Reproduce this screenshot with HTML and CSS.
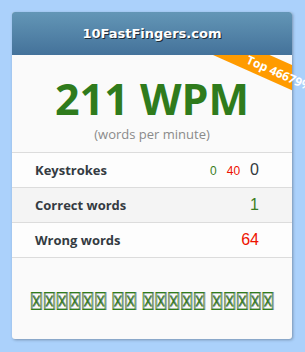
FILE: index.html
```html
<!DOCTYPE html>
<html lang="en">
<head>
  <meta charset="UTF-8">
  <meta name="viewport" content="width=device-width, initial-scale=1.0">
  <title>10FastFingers</title>
  <link rel="stylesheet" href="styles.css">
</head>
<body>

  <div class="card">
    <div class="card-header">10FastFingers.com</div>

    <!-- 리본: 배경은 카드 안에서 잘리고 글자는 잘리지 않음 -->
    <div class="ribbon-clip"><div class="ribbon-band"></div></div>
    <div class="ribbon-text">Top 46679%</div>

    <div class="result">
      <div class="wpm">211 WPM</div>
      <div class="wpm-label">(words per minute)</div>
    </div>

    <div class="stats">
      <div class="stat-row">
        <span class="stat-name">Keystrokes</span>
        <span class="stat-value">
          <small class="good">0</small><small class="bad">40</small>0
        </span>
      </div>
      <div class="stat-row alt">
        <span class="stat-name">Correct words</span>
        <span class="stat-value good">1</span>
      </div>
      <div class="stat-row">
        <span class="stat-name">Wrong words</span>
        <span class="stat-value bad">64</span>
      </div>
    </div>

    <div class="footer-link"><span class="tofu">☒☒☒☒☒☒ ☒☒ ☒☒☒☒☒ ☒☒☒☒☒</span></div>
  </div>

</body>
</html>
```

FILE: styles.css
```css
    body {
      background-color: #abd1fb;
      margin: 0;
      padding: 12px;
    }

    .card {
      width: 280px;
      height: 327px;
      background-color: #fafafa;
      border-radius: 3px;
      box-shadow: 1px 1px 3px rgba(0, 0, 0, 0.3);
      position: relative;
      display: flex;
      flex-direction: column;
    }

    .card-header {
      height: 43px;
      line-height: 43px;
      text-align: center;
      background: linear-gradient(#6396b6, #44729a);
      border-radius: 3px 3px 0 0;
      color: white;
      font-family: "DejaVu Sans", sans-serif;
      font-weight: bold;
      font-size: 13px;
      text-shadow: 1px 1px 0 #1d2b36;
    }

    /* 오른쪽 위 리본 */
    .ribbon-clip {
      position: absolute;
      left: 0;
      right: 0;
      top: 43px;
      bottom: 0;
      overflow: hidden;
    }

    .ribbon-band {
      position: absolute;
      left: 201px;
      top: -23px;
      width: 160px;
      height: 23px;
      background-color: #ff9b00;
      transform-origin: 0 100%;
      transform: rotate(24deg);
    }

    .ribbon-text {
      position: absolute;
      left: 201px;
      top: 20px;
      height: 23px;
      line-height: 26px;
      padding-left: 33px;
      white-space: nowrap;
      color: white;
      font-family: "Open Sans", sans-serif;
      font-weight: bold;
      font-size: 12px;
      transform-origin: 0 100%;
      transform: rotate(24deg);
    }

    .result {
      text-align: center;
      padding-top: 22px;
      height: 75px;
    }

    .wpm {
      font-family: "Open Sans", sans-serif;
      font-weight: bold;
      font-size: 43px;
      line-height: 44px;
      color: #2f7b1c;
    }

    .wpm-label {
      font-family: "Open Sans", sans-serif;
      font-size: 13px;
      line-height: 18px;
      margin-top: 4px;
      color: #8a8a8a;
    }

    .stats {
      border-top: 1px solid #dcdcdc;
    }

    .stat-row {
      height: 34px;
      border-bottom: 1px solid #dcdcdc;
      display: flex;
      align-items: center;
      justify-content: space-between;
      padding: 0 33px 0 23px;
      background-color: #fdfdfd;
    }

    .stat-row.alt {
      background-color: #f4f4f4;
    }

    .stat-name {
      font-family: "Open Sans", sans-serif;
      font-weight: bold;
      font-size: 13px;
      color: #343b42;
    }

    .stat-value {
      font-family: "Liberation Sans", sans-serif;
      font-size: 16px;
      color: #333a40;
    }

    .stat-value small {
      font-size: 12px;
      margin-right: 10px;
    }

    .good {
      color: #3b7d22;
    }

    .bad {
      color: #ee1100;
    }

    .footer-link {
      flex: 1;
      display: flex;
      align-items: center;
      justify-content: center;
      padding-top: 4px;
    }

    .tofu {
      display: inline-block;
      font-family: "DejaVu Sans", sans-serif;
      font-size: 14.3px;
      line-height: 14px;
      color: #2f7d1c;
      text-shadow: 1px 0 0 #888;
      white-space: nowrap;
      transform: scaleY(1.7);
    }
```
